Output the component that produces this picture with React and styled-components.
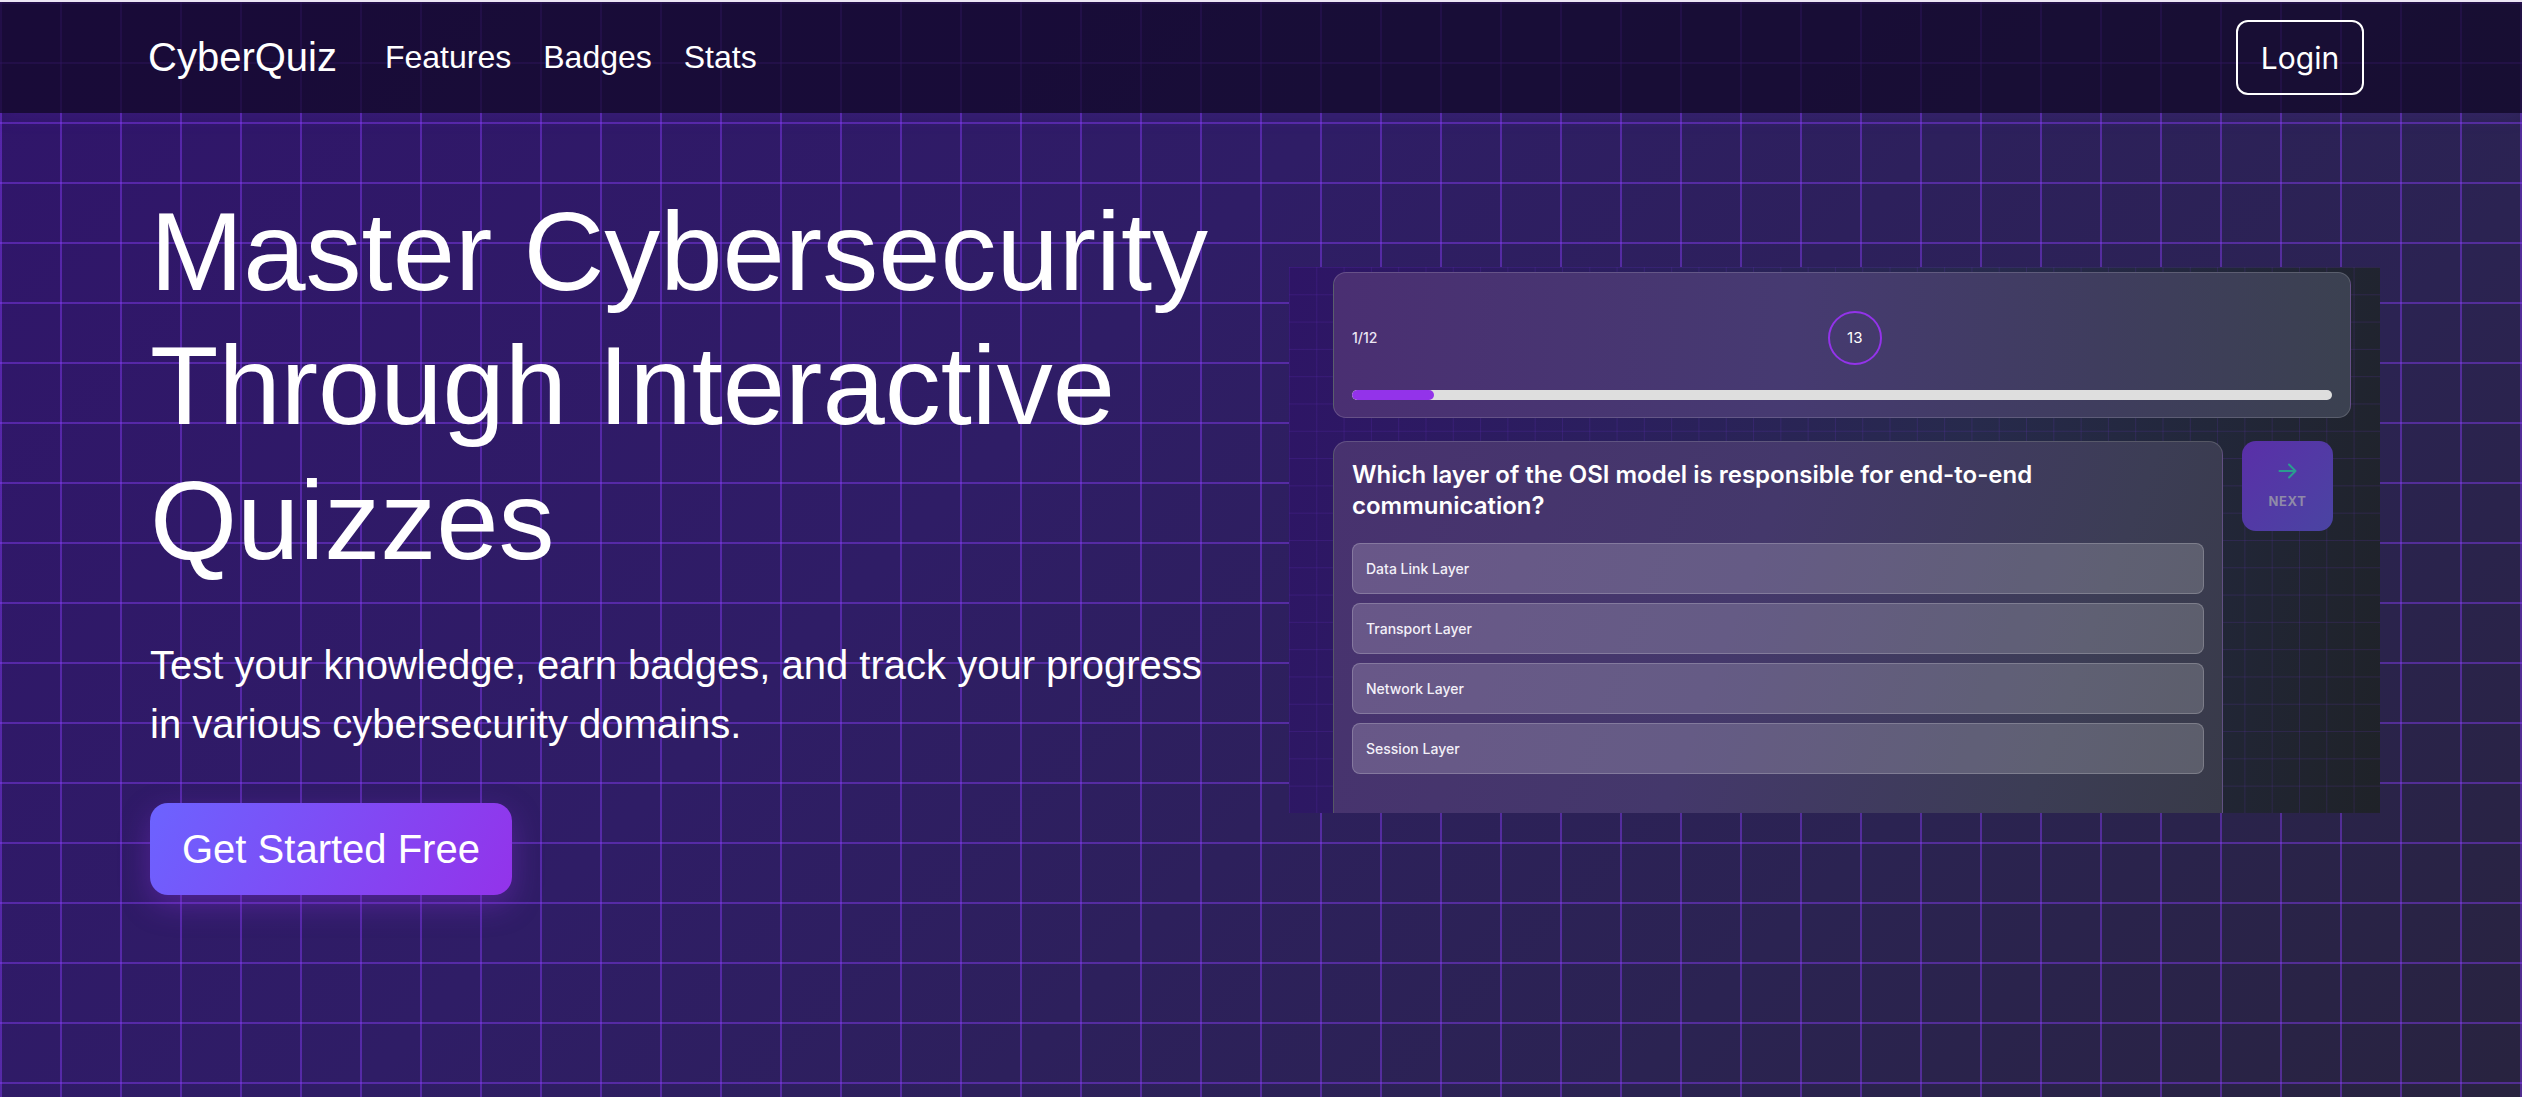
import React from 'react';
import styled, { createGlobalStyle } from 'styled-components';

const GlobalStyle = createGlobalStyle`
  html, body {
    margin: 0;
    padding: 0;
  }
  body {
    background: #2e1a63;
    font-family: "Liberation Sans", Arial, sans-serif;
  }
  * {
    box-sizing: border-box;
  }
`

const Page = styled.div`
  min-height: 100vh;
  overflow: hidden;
  border-top: 2px solid #ece6f4;
  color: #fff;
  background-color: #2e1a63;
  background-image:
    linear-gradient(to right, rgba(139, 61, 255, 0.42) 2px, transparent 2px),
    linear-gradient(to bottom, rgba(139, 61, 255, 0.42) 2px, transparent 2px),
    linear-gradient(135deg, #30156a 0%, #2f1d66 40%, #2b2352 75%, #28233f 100%);
  background-size: 60px 60px, 60px 60px, 100% 100%;
`
const Header = styled.header`
  height: 111px;
  display: flex;
  align-items: center;
  justify-content: space-between;
  padding: 0 158px 0 148px;
  background: rgba(18, 8, 40, 0.75);
  box-shadow: 0 4px 18px rgba(124, 58, 237, 0.12);
`
const Brand = styled.div`
  display: flex;
  align-items: center;
`
const Logo = styled.a`
  font-size: 40px;
  color: #fff;
  text-decoration: none;
`
const Nav = styled.nav`
  display: flex;
  gap: 32px;
  margin-left: 48px;
`
const NavLink = styled.a`
  font-size: 32px;
  color: #fff;
  text-decoration: none;
`
const LoginButton = styled.button`
  width: 128px;
  height: 75px;
  font-family: Inter, "Liberation Sans", sans-serif;
  font-size: 30px;
  color: #fff;
  background: transparent;
  border: 2px solid #fff;
  border-radius: 12px;
`
const Hero = styled.main`
  display: grid;
  grid-template-columns: 1fr 1fr;
  gap: 48px;
  align-items: center;
  width: 2230px;
  margin-left: 150px;
  padding-top: 72px;
`
const Intro = styled.div`
  display: flex;
  flex-direction: column;
  align-items: flex-start;
`
const Title = styled.h1`
  margin: 0;
  font-size: 112px;
  line-height: 1.2;
  font-weight: 400;
`
const Subtitle = styled.p`
  margin: 48px 0 0;
  font-size: 40px;
  line-height: 1.48;
`
const CtaButton = styled.button`
  margin-top: 48px;
  padding: 22px 32px;
  font-family: "Liberation Sans", Arial, sans-serif;
  font-size: 40px;
  line-height: 1.2;
  color: #fff;
  border: none;
  border-radius: 18px;
  background: linear-gradient(120deg, #6c63ff 0%, #9333ea 100%);
  box-shadow: 0 10px 30px rgba(147, 51, 234, 0.35);
`

// aperçu du quiz
const Preview = styled.div`
  height: 546px;
  overflow: hidden;
  padding: 5px 0 0 44px;
  font-family: Inter, "Liberation Sans", sans-serif;
  background-image:
    linear-gradient(to right, rgba(139, 61, 255, 0.13) 1px, transparent 1px),
    linear-gradient(to bottom, rgba(139, 61, 255, 0.13) 1px, transparent 1px),
    linear-gradient(100deg, #2e1566 0%, #2b1f5e 30%, #272a4c 60%, #22273a 80%, #1f2228 100%);
  background-size: 27.3px 27.3px, 27.3px 27.3px, 100% 100%;
`
const TimerCard = styled.div`
  width: 1018px;
  height: 146px;
  padding: 38px 18px 17px;
  border: 1px solid rgba(255, 255, 255, 0.16);
  border-radius: 13px;
  background: linear-gradient(95deg, #4a2f72 0%, #463a71 45%, #3f3d5e 75%, #3b4150 100%);
`
const TimerRow = styled.div`
  display: flex;
  align-items: center;
  justify-content: space-between;
`
const Count = styled.span`
  font-size: 14px;
  font-weight: 500;
  color: #ebe6f3;
`
const Timer = styled.div`
  width: 54px;
  height: 54px;
  display: flex;
  align-items: center;
  justify-content: center;
  border: 2px solid #9333ea;
  border-radius: 50%;
  font-size: 15px;
  color: #fff;
`
const Track = styled.div`
  margin-top: 25px;
  height: 10px;
  border-radius: 5px;
  background: #dedede;
  overflow: hidden;
`
const Fill = styled.div`
  height: 100%;
  border-radius: 5px;
  background: #9333ea;
`
const QuizRow = styled.div`
  display: flex;
  align-items: flex-start;
  gap: 19px;
  margin-top: 23px;
`
const QuestionCard = styled.div`
  width: 890px;
  padding: 17px 18px 60px;
  border: 1px solid rgba(255, 255, 255, 0.15);
  border-radius: 14px;
  background: linear-gradient(110deg, #48326f 0%, #44386b 45%, #3c3d55 80%, #383a48 100%);
`
const Question = styled.h3`
  margin: 0 0 22px;
  font-size: 24px;
  line-height: 31px;
  font-weight: 600;
  color: #fff;
`
const Options = styled.div`
  display: flex;
  flex-direction: column;
  gap: 9px;
`
const Option = styled.div`
  height: 51px;
  display: flex;
  align-items: center;
  padding: 0 13px;
  border: 1px solid rgba(255, 255, 255, 0.2);
  border-radius: 8px;
  background: rgba(255, 255, 255, 0.18);
  font-size: 14px;
  font-weight: 500;
  color: #f3f0f8;
`
const NextButton = styled.button`
  width: 91px;
  height: 90px;
  display: flex;
  flex-direction: column;
  align-items: center;
  justify-content: center;
  gap: 14px;
  border: none;
  border-radius: 14px;
  background: linear-gradient(135deg, #5a2fa8 0%, #4a44a2 100%);
  font-family: Inter, "Liberation Sans", sans-serif;
  font-size: 13px;
  font-weight: 700;
  letter-spacing: 0.6px;
  line-height: 16px;
  color: #8f8aa8;
`

const options = ['Data Link Layer', 'Transport Layer', 'Network Layer', 'Session Layer']
const current = 1
const total = 12

export default function App() {
  return (
    <Page>
      <GlobalStyle />
      <Header>
        <Brand>
          <Logo href="#">CyberQuiz</Logo>
          <Nav>
            <NavLink href="#">Features</NavLink>
            <NavLink href="#">Badges</NavLink>
            <NavLink href="#">Stats</NavLink>
          </Nav>
        </Brand>
        <LoginButton>Login</LoginButton>
      </Header>
      <Hero>
        <Intro>
          <Title>Master Cybersecurity Through Interactive Quizzes</Title>
          <Subtitle>
            Test your knowledge, earn badges, and track your progress in various cybersecurity domains.
          </Subtitle>
          <CtaButton>Get Started Free</CtaButton>
        </Intro>
        <Preview>
          <TimerCard>
            <TimerRow>
              <Count>{current}/{total}</Count>
              <Timer>13</Timer>
              <span />
            </TimerRow>
            <Track>
              <Fill style={{ width: `${(current / total) * 100}%` }} />
            </Track>
          </TimerCard>
          <QuizRow>
            <QuestionCard>
              <Question>Which layer of the OSI model is responsible for end-to-end communication?</Question>
              <Options>
                {options.map((o) => (
                  <Option key={o}>{o}</Option>
                ))}
              </Options>
            </QuestionCard>
            <NextButton>
              <svg width="20" height="16" viewBox="0 0 20 16" fill="none">
                <path d="M1.5 8h16M11 1.5L17.5 8 11 14.5" stroke="#2a9d8f" strokeWidth="2" strokeLinecap="round" strokeLinejoin="round" />
              </svg>
              NEXT
            </NextButton>
          </QuizRow>
        </Preview>
      </Hero>
    </Page>
  )
}
